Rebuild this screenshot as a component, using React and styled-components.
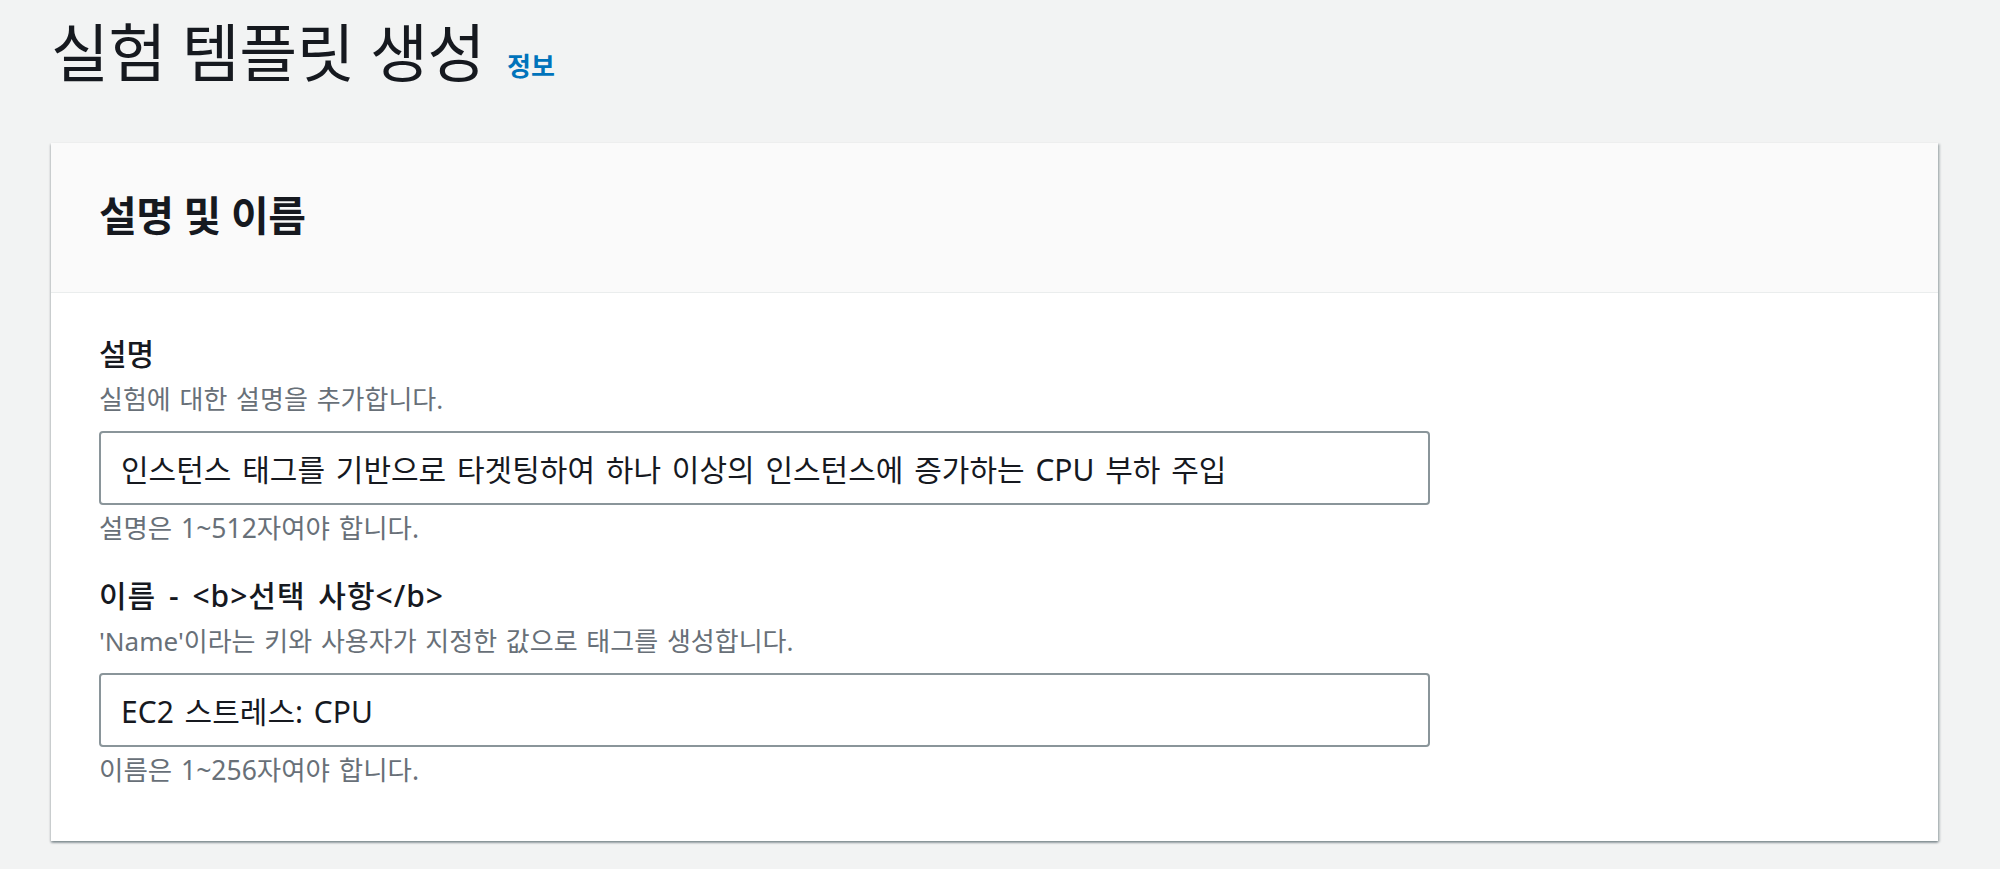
import React from "react";
import styled, { createGlobalStyle } from "styled-components";

const GlobalStyle = createGlobalStyle`
  html, body {
    margin: 0;
    padding: 0;
    background: #f2f3f3;
  }
  body {
    font-family: "Noto Sans", "Noto Sans CJK KR", sans-serif;
    color: #16191f;
  }
`;

const Page = styled.main`
  min-height: 869px;
  box-sizing: border-box;
  padding: 16px 62px 0 51px;
  display: flex;
  flex-direction: column;
`;

const TitleRow = styled.div`
  display: flex;
  align-items: baseline;
  gap: 22px;
  height: 127px;
`;

const Title = styled.h1`
  margin: 0;
  font-size: 63px;
  line-height: 72px;
  font-weight: 400;
  letter-spacing: -0.5px;
  color: #16191f;
`;

const InfoLink = styled.a`
  font-size: 26px;
  font-weight: 700;
  color: #0073bb;
  text-decoration: none;
  cursor: pointer;
`;

const Card = styled.section`
  background: #ffffff;
  box-shadow: 0 2px 2px 0 rgba(0, 28, 36, 0.3), 2px 1px 2px 0 rgba(0, 28, 36, 0.2),
    -1px 1px 2px 0 rgba(0, 28, 36, 0.12);
`;

const CardHeader = styled.header`
  box-sizing: border-box;
  height: 150px;
  background: #fafafa;
  border-bottom: 1px solid #eaeded;
  display: flex;
  align-items: center;
  padding: 0 48px 6px;
`;

const CardTitle = styled.h2`
  margin: 0;
  font-size: 41px;
  line-height: 48px;
  font-weight: 700;
  letter-spacing: -0.5px;
`;

const CardBody = styled.div`
  padding: 41px 48px 55px;
  display: flex;
  flex-direction: column;
  gap: 32px;
`;

const Field = styled.div`
  display: flex;
  flex-direction: column;
`;

const Label = styled.label`
  font-size: 30px;
  line-height: 40px;
  font-weight: 500;
  letter-spacing: ${(p) => (p.$optional ? "1px" : "0")};
  word-spacing: ${(p) => (p.$optional ? "4px" : "0")};
  color: #16191f;
`;

const Description = styled.div`
  margin-top: 9px;
  font-size: 26px;
  line-height: 32px;
  color: #687078;
  word-spacing: 2px;
`;

const Input = styled.input`
  margin-top: 16px;
  width: 1331px;
  height: 74px;
  box-sizing: border-box;
  border: 2px solid #8a959a;
  border-radius: 4px;
  padding: 0 20px;
  font-family: "Noto Sans", "Noto Sans CJK KR", sans-serif;
  font-size: 30px;
  color: #16191f;
  background: #ffffff;
  word-spacing: 3px;
  outline: none;
`;

const Constraint = styled.div`
  margin-top: 7px;
  font-size: 26.5px;
  line-height: 32px;
  color: #687078;
  word-spacing: 2px;
`;

export default function App() {
  return (
    <>
      <GlobalStyle />
      <Page>
        <TitleRow>
          <Title>실험 템플릿 생성</Title>
          <InfoLink>정보</InfoLink>
        </TitleRow>
        <Card>
          <CardHeader>
            <CardTitle>설명 및 이름</CardTitle>
          </CardHeader>
          <CardBody>
            <Field>
              <Label>설명</Label>
              <Description>실험에 대한 설명을 추가합니다.</Description>
              <Input
                readOnly
                value="인스턴스 태그를 기반으로 타겟팅하여 하나 이상의 인스턴스에 증가하는 CPU 부하 주입"
              />
              <Constraint>설명은 1~512자여야 합니다.</Constraint>
            </Field>
            <Field>
              <Label $optional>이름 - &lt;b&gt;선택 사항&lt;/b&gt;</Label>
              <Description>'Name'이라는 키와 사용자가 지정한 값으로 태그를 생성합니다.</Description>
              <Input readOnly value="EC2 스트레스: CPU" />
              <Constraint>이름은 1~256자여야 합니다.</Constraint>
            </Field>
          </CardBody>
        </Card>
      </Page>
    </>
  );
}
